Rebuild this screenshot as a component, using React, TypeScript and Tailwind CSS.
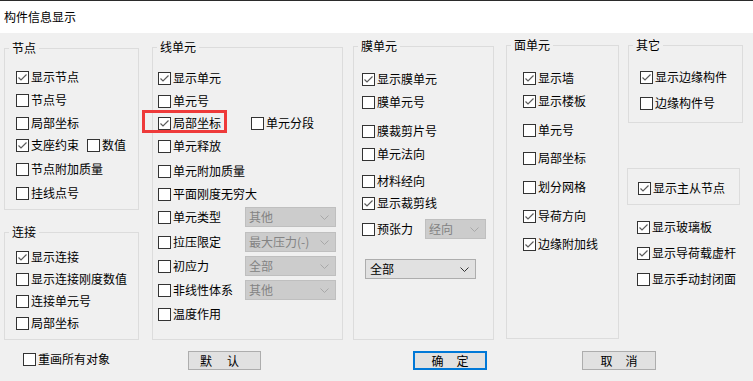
import type { ReactNode } from 'react';

// 复选框：13px 方框，勾选时画灰色对勾
function Box({ checked }: { checked?: boolean }) {
  return (
    <span className="flex h-[13px] w-[13px] shrink-0 items-center justify-center border border-[#333333] bg-white">
      {checked && (
        <svg width="11" height="11" viewBox="0 0 11 11">
          <polyline points="1.5,5.5 4,8 9.5,2.5" fill="none" stroke="#5c5c5c" strokeWidth="1.2" />
        </svg>
      )}
    </span>
  );
}

function Check({ label, checked, className = '' }: { label: string; checked?: boolean; className?: string }) {
  return (
    <div className={`flex h-[16px] items-center gap-[2px] ${className}`}>
      <Box checked={checked} />
      <span className="whitespace-nowrap">{label}</span>
    </div>
  );
}

function Group({ title, className = '', children }: { title: string; className?: string; children: ReactNode }) {
  return (
    <div className={`relative border border-[#dcdcdc] ${className}`}>
      <span className="absolute -top-[9px] left-[4px] bg-[#f0f0f0] px-[3px] leading-[16px]">{title}</span>
      {children}
    </div>
  );
}

function Select({ value, disabled, className = '' }: { value: string; disabled?: boolean; className?: string }) {
  return (
    <div
      className={`flex h-[20px] shrink-0 items-center justify-between border pr-[6px] ${
        disabled ? 'border-[#bfbfbf] bg-[#cccccc] pl-[3px] text-[#838383]' : 'border-[#adadad] bg-[#e1e1e1] pl-[4px] text-black'
      } ${className}`}
    >
      <span className="whitespace-nowrap">{value}</span>
      <svg width="9" height="5" viewBox="0 0 9 5">
        <polyline
          points="0.5,0.5 4.5,4.5 8.5,0.5"
          fill="none"
          stroke={disabled ? '#a8a8a8' : '#333333'}
        />
      </svg>
    </div>
  );
}

export default function App() {
  return (
    <div className="h-[381px] w-[753px] overflow-hidden bg-[#f0f0f0] font-['Noto_Sans_CJK_SC','Microsoft_YaHei',sans-serif] text-[12px] leading-[16px] text-black">
      <div className="flex h-[33px] items-center border-t border-[#2b2b2b] bg-white pl-[4px]">构件信息显示</div>

      <div className="flex items-start pl-[4px]">
        {/* 节点 / 连接 */}
        <div className="mt-[15px] w-[135px] shrink-0">
          <Group title="节点" className="h-[162px] pl-[11px] pt-[20px]">
            <Check checked label="显示节点" />
            <Check className="mt-[7px]" label="节点号" />
            <Check className="mt-[7px]" label="局部坐标" />
            <div className="mt-[6px] flex items-center">
              <Check checked label="支座约束" />
              <Check className="ml-[8px]" label="数值" />
            </div>
            <Check className="mt-[8px]" label="节点附加质量" />
            <Check className="mt-[8px]" label="挂线点号" />
          </Group>
          <Group title="连接" className="mt-[22px] h-[108px] pl-[11px] pt-[16px]">
            <Check checked label="显示连接" />
            <Check className="mt-[6px]" label="显示连接刚度数值" />
            <Check className="mt-[6px]" label="连接单元号" />
            <Check className="mt-[6px]" label="局部坐标" />
          </Group>
        </div>

        {/* 线单元 */}
        <Group title="线单元" className="ml-[13px] mt-[14px] h-[293px] w-[191px] shrink-0 pl-[5px] pt-[20px]">
          <div className="flex h-[20px] items-center">
            <Check checked label="显示单元" />
          </div>
          <div className="mt-[3px] flex h-[20px] items-center">
            <Check label="单元号" />
          </div>
          <div className="relative mt-[2px] flex h-[20px] items-center">
            <div className="w-[93px]">
              <Check checked label="局部坐标" />
            </div>
            <Check label="单元分段" />
            <span className="absolute -left-[16px] -top-[3px] h-[23px] w-[85px] border-[3px] border-[#ee3a3a]" />
          </div>
          <div className="mt-[3px] flex h-[20px] items-center">
            <Check label="单元释放" />
          </div>
          <div className="mt-[5px] flex h-[20px] items-center">
            <Check label="单元附加质量" />
          </div>
          <div className="mt-[3px] flex h-[20px] items-center">
            <Check label="平面刚度无穷大" />
          </div>
          <div className="mt-[3px] flex h-[20px] items-center">
            <Check className="w-[87px]" label="单元类型" />
            <Select disabled value="其他" className="w-[91px]" />
          </div>
          <div className="mt-[5px] flex h-[20px] items-center">
            <Check className="w-[87px]" label="拉压限定" />
            <Select disabled value="最大压力(-)" className="w-[91px]" />
          </div>
          <div className="mt-[4px] flex h-[20px] items-center">
            <Check className="w-[87px]" label="初应力" />
            <Select disabled value="全部" className="w-[91px]" />
          </div>
          <div className="mt-[4px] flex h-[20px] items-center">
            <Check className="w-[87px]" label="非线性体系" />
            <Select disabled value="其他" className="w-[91px]" />
          </div>
          <div className="mt-[4px] flex h-[20px] items-center">
            <Check label="温度作用" />
          </div>
        </Group>

        {/* 膜单元 */}
        <Group title="膜单元" className="ml-[10px] mt-[13px] h-[294px] w-[141px] shrink-0 pl-[8px] pt-[22px]">
          <div className="flex h-[20px] items-center">
            <Check checked label="显示膜单元" />
          </div>
          <div className="mt-[3px] flex h-[20px] items-center">
            <Check label="膜单元号" />
          </div>
          <div className="mt-[9px] flex h-[20px] items-center">
            <Check label="膜裁剪片号" />
          </div>
          <div className="mt-[3px] flex h-[20px] items-center">
            <Check label="单元法向" />
          </div>
          <div className="mt-[7px] flex h-[20px] items-center">
            <Check label="材料经向" />
          </div>
          <div className="mt-[2px] flex h-[20px] items-center">
            <Check checked label="显示裁剪线" />
          </div>
          <div className="mt-[6px] flex h-[20px] items-center">
            <Check className="w-[63px]" label="预张力" />
            <Select disabled value="经向" className="w-[61px]" />
          </div>
          <div className="ml-[3px] mt-[20px] flex h-[20px] items-center">
            <Select value="全部" className="w-[111px]" />
          </div>
        </Group>

        {/* 面单元 */}
        <Group title="面单元" className="ml-[12px] mt-[12px] h-[294px] w-[113px] shrink-0 pl-[16px] pt-[24px]">
          <Check checked label="显示墙" />
          <Check checked className="mt-[7px]" label="显示楼板" />
          <Check className="mt-[13px]" label="单元号" />
          <Check className="mt-[12px]" label="局部坐标" />
          <Check className="mt-[13px]" label="划分网格" />
          <Check checked className="mt-[13px]" label="导荷方向" />
          <Check checked className="mt-[12px]" label="边缘附加线" />
        </Group>

        {/* 其它 */}
        <div className="ml-[8px] mt-[12px] w-[116px] shrink-0">
          <Group title="其它" className="ml-[1px] h-[78px] w-[115px] pl-[11px] pt-[23px]">
            <Check checked label="显示边缘构件" />
            <Check className="mt-[10px]" label="边缘构件号" />
          </Group>
          <div className="mt-[45px] h-[37px] w-[113px] border border-[#dcdcdc] pl-[10px] pt-[11px]">
            <Check checked label="显示主从节点" />
          </div>
          <div className="pl-[10px]">
            <Check checked className="mt-[14px]" label="显示玻璃板" />
            <Check checked className="mt-[10px]" label="显示导荷载虚杆" />
            <Check className="mt-[10px]" label="显示手动封闭面" />
          </div>
        </div>
      </div>

      {/* 底部按钮 */}
      <div className="mt-[11px] flex h-[19px] items-center">
        <div className="w-[188px] self-start pl-[23px]">
          <Check label="重画所有对象" />
        </div>
        <button type="button" className="flex h-[19px] w-[73px] items-center gap-[15px] border border-[#adadad] bg-[#e1e1e1] pl-[11px]">
          <span>默</span>
          <span>认</span>
        </button>
        <button type="button" className="ml-[152px] flex h-[19px] w-[74px] items-center justify-center gap-[13px] border-2 border-[#0078d7] bg-[#e1e1e1]">
          <span>确</span>
          <span>定</span>
        </button>
        <button type="button" className="ml-[95px] flex h-[19px] w-[74px] items-center justify-center gap-[13px] border border-[#adadad] bg-[#e1e1e1]">
          <span>取</span>
          <span>消</span>
        </button>
      </div>
    </div>
  );
}
